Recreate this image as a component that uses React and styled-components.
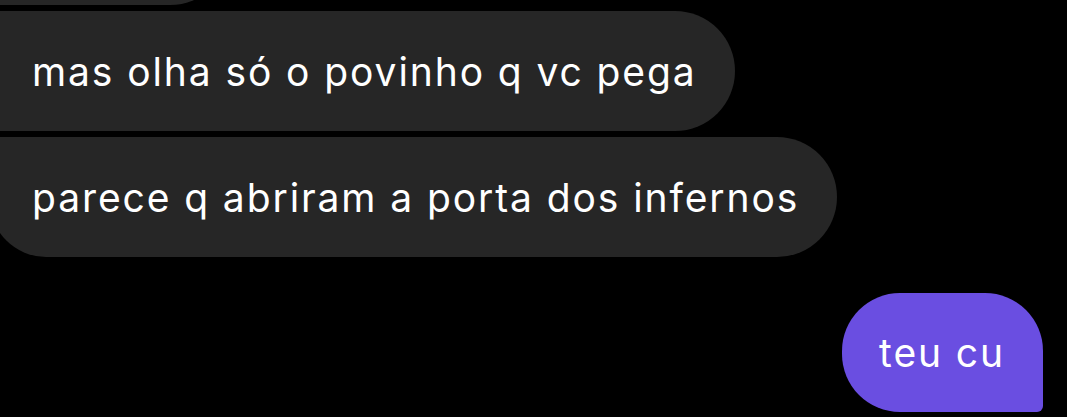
import React from "react";
import styled, { createGlobalStyle, css } from "styled-components";

const Global = createGlobalStyle`
  html, body { margin: 0; padding: 0; background: #000; }
  body { font-family: Inter, "Noto Sans", "Liberation Sans", sans-serif; overflow: hidden; }
`;

const Thread = styled.div`
  width: 1067px;
  height: 417px;
  background: #000;
  display: flex;
  flex-direction: column;
  gap: 6px;
  overflow: hidden;
`;

const Row = styled.div`
  display: flex;
  justify-content: ${(p) => (p.$mine ? "flex-end" : "flex-start")};
  padding: ${(p) => (p.$mine ? "0 24px 0 0" : "0")};
  margin-top: ${(p) => p.$offset || 0}px;
`;

const Bubble = styled.div`
  box-sizing: border-box;
  height: 120px;
  display: flex;
  align-items: center;
  padding: 0 40px;
  font-size: 39px;
  letter-spacing: 1.9px;
  color: #fff;
  white-space: nowrap;
  ${(p) =>
    p.$mine
      ? css`
          background: #6a4ee1;
          border-radius: 58px 58px 6px 58px;
          padding: 0 38px 0 37px;
          height: 119px;
        `
      : css`
          background: #262626;
          margin-left: -10px;
          padding-left: 42px;
          padding-right: 38px;
          border-radius: ${p.$last ? "8px 60px 60px 56px" : "8px 60px 60px 8px"};
        `}
`;

const Ghost = styled(Bubble)`
  width: 240px;
`;

export default function App() {
  return (
    <>
      <Global />
      <Thread>
        <Row $offset={-115}>
          <Ghost />
        </Row>
        <Row>
          <Bubble>mas olha só o povinho q vc pega</Bubble>
        </Row>
        <Row>
          <Bubble $last>parece q abriram a porta dos infernos</Bubble>
        </Row>
        <Row $mine $offset={30}>
          <Bubble $mine>teu cu</Bubble>
        </Row>
      </Thread>
    </>
  );
}
